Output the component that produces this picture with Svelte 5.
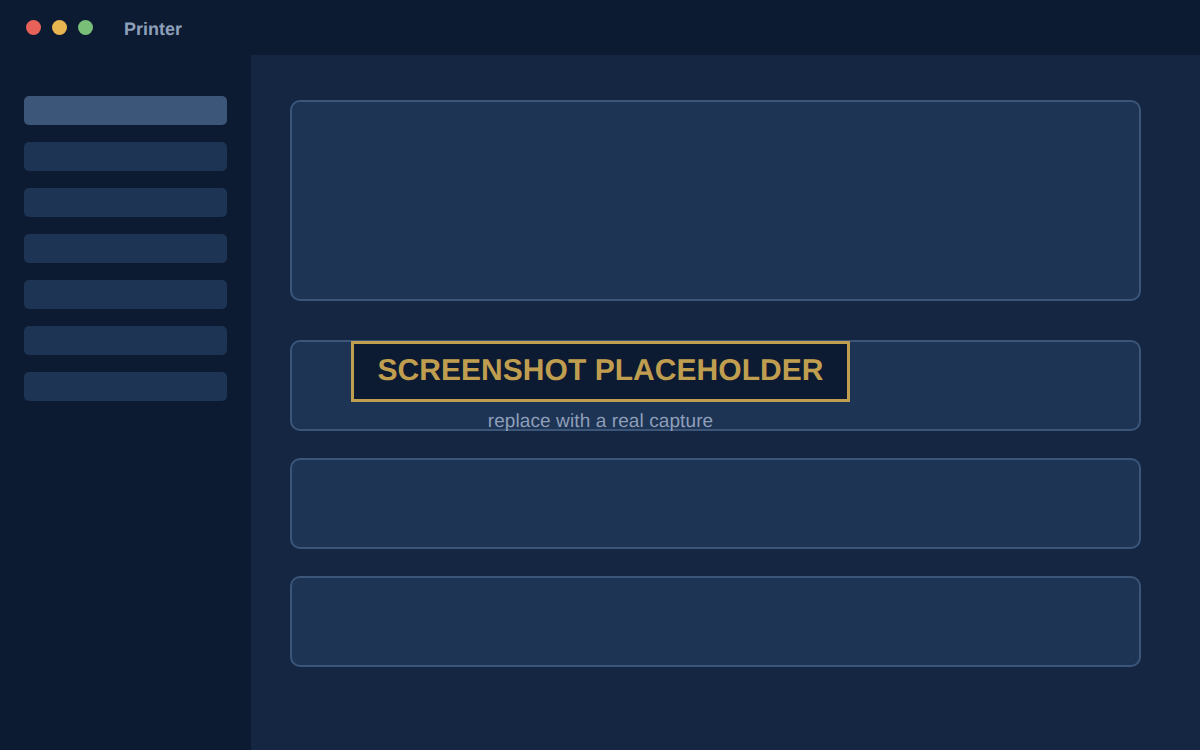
<script lang="ts">
  const navItems = [0, 1, 2, 3, 4, 5, 6];
  const lowerCards = [0, 1, 2];
</script>

<div class="window">
  <header class="titlebar">
    <div class="dots">
      <span class="dot red"></span>
      <span class="dot yellow"></span>
      <span class="dot green"></span>
    </div>
    <span class="title">Printer</span>
  </header>

  <div class="body">
    <nav class="sidebar">
      {#each navItems as item}
        <div class="nav-item" class:active={item === 0}></div>
      {/each}
    </nav>

    <main class="main">
      <div class="card hero"></div>
      {#each lowerCards as card}
        <div class="card"></div>
      {/each}
    </main>
  </div>

  <div class="placeholder">
    <div class="stamp">SCREENSHOT PLACEHOLDER</div>
    <div class="note">replace with a real capture</div>
  </div>
</div>

<style>
  :global(body) {
    margin: 0;
    background: #0c1b31;
    font-family: "Liberation Sans", Arial, sans-serif;
    text-rendering: geometricPrecision;
  }
  .window {
    position: relative;
    width: 1200px;
    height: 750px;
    display: flex;
    flex-direction: column;
    overflow: hidden;
  }
  .titlebar {
    height: 55px;
    flex: none;
    display: flex;
    align-items: center;
    padding-left: 26px;
    box-sizing: border-box;
    background: #0c1b31;
  }
  .dots {
    display: flex;
    gap: 11px;
    margin-right: 31px;
    margin-top: -1px;
  }
  .dot {
    width: 15px;
    height: 15px;
    border-radius: 50%;
  }
  .red {
    background: #e8625a;
  }
  .yellow {
    background: #e9b550;
  }
  .green {
    background: #79bf78;
  }
  .title {
    font-size: 18px;
    font-weight: 700;
    color: #8e9fba;
    margin-top: 3px;
  }
  .body {
    flex: 1;
    display: flex;
  }
  .sidebar {
    width: 251px;
    flex: none;
    box-sizing: border-box;
    padding: 41px 24px 0;
    display: flex;
    flex-direction: column;
    gap: 17px;
    background: #0c1b31;
  }
  .nav-item {
    height: 29px;
    border-radius: 5px;
    background: #1e3454;
  }
  .nav-item.active {
    background: #3b5679;
  }
  .main {
    flex: 1;
    box-sizing: border-box;
    padding: 45px 59px 0 39px;
    display: flex;
    flex-direction: column;
    gap: 27px;
    background: #142642;
  }
  .card {
    height: 91px;
    box-sizing: border-box;
    border: 2px solid #3b5679;
    border-radius: 10px;
    background: #1e3454;
  }
  .card.hero {
    height: 201px;
    margin-bottom: 12px;
  }
  .placeholder {
    position: absolute;
    left: 351px;
    top: 341px;
    width: 499px;
    text-align: center;
  }
  .stamp {
    box-sizing: border-box;
    height: 61px;
    line-height: 53px;
    border: 3px solid #c09e50;
    background: #0c1b31;
    color: #c09e50;
    font-size: 30px;
    font-weight: 700;
    letter-spacing: 0.05px;
    white-space: nowrap;
  }
  .note {
    margin-top: 9px;
    font-size: 19px;
    letter-spacing: 0.1px;
    line-height: 22px;
    color: #8e9fba;
  }
</style>
